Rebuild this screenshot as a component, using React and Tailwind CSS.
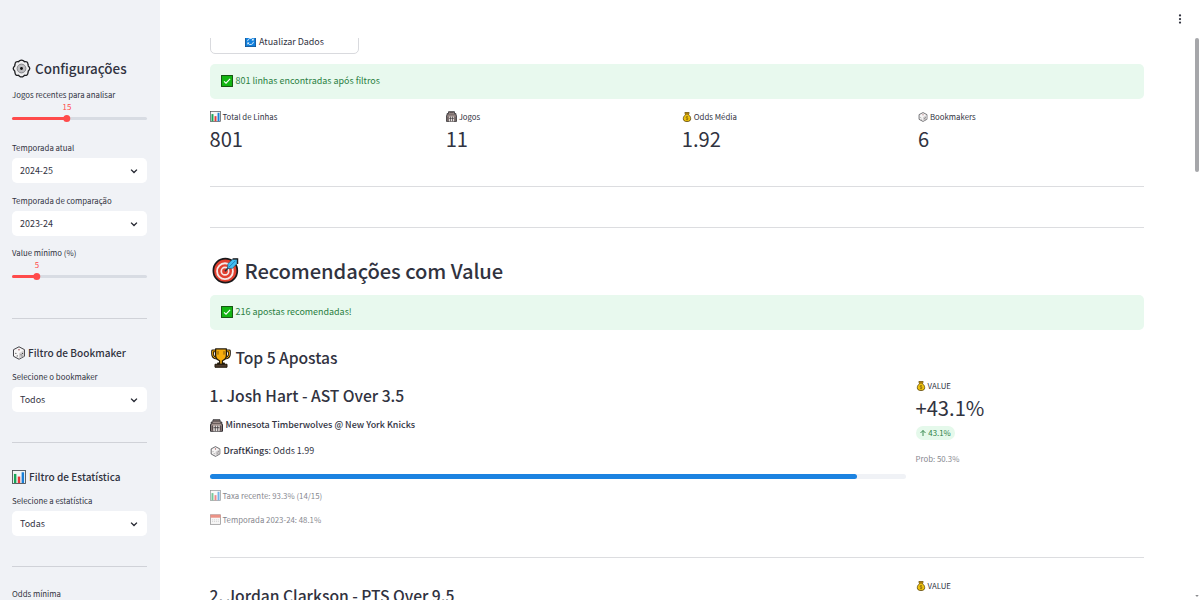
import React from 'react';

const Svg = ({ className, children }) => (
  <svg viewBox="0 0 16 16" className={`shrink-0 ${className}`} fill="none">{children}</svg>
);

const Gear = ({ className }) => (
  <Svg className={className}>
    <path d="M6.300 1.500Q8 .3 9.700 1.500L10.500 2.300Q13.300 1.700 13.500 4.600L13.700 5.800Q16.200 8 13.700 10.200L13.500 11.400Q13.300 14.300 10.500 13.700L9.700 14.500Q8 15.700 6.300 14.500L5.500 13.700Q2.700 14.300 2.500 11.400L2.300 10.200Q-.2 8 2.300 5.800L2.500 4.600Q2.700 1.700 5.500 2.300z" fill="#eeeeef" stroke="#1d1e21" strokeWidth="1.100" strokeLinejoin="round" />
    <circle cx="8" cy="8" r="3.700" fill="#bdbdc0" stroke="#77787c" strokeWidth=".7" />
    <circle cx="8" cy="8" r="1.200" fill="#111" />
  </Svg>
);

const Die = ({ className }) => (
  <Svg className={className}>
    <path d="M8 .9l6.300 3.300v7.500L8 15.100l-6.300-3.400V4.200z" fill="#f6f5f5" stroke="#3a3a40" strokeWidth="1.100" strokeLinejoin="round" />
    <path d="M8 8.200l5.800-3.600v6.800L8 14.500z" fill="#d3d0d1" />
    <circle cx="8" cy="4.300" r=".9" fill="#9c4a4e" />
    <circle cx="4.400" cy="8.500" r=".7" fill="#555" />
    <circle cx="6" cy="11.300" r=".7" fill="#555" />
    <circle cx="10.300" cy="10" r=".7" fill="#444" />
    <circle cx="12" cy="8.500" r=".7" fill="#444" />
    <circle cx="11.500" cy="11.500" r=".6" fill="#444" />
  </Svg>
);

const Bars = ({ className }) => (
  <Svg className={className}>
    <rect x=".6" y=".6" width="14.800" height="14.800" fill="#f4f6f5" stroke="#4a4e52" strokeWidth="1" />
    <rect x="2.200" y="4.500" width="2.800" height="10.400" fill="#18a558" />
    <rect x="6.600" y="7.500" width="2.800" height="7.400" fill="#e5383b" />
    <rect x="11" y="2.600" width="2.800" height="12.300" fill="#1b7fd6" />
  </Svg>
);

const Stadium = ({ className }) => (
  <Svg className={className}>
    <path d="M3.700 1h8.600v2.800h2.200v3h.9v8.300H.6V6.800h.9v-3h2.200z" fill="#a3938f" stroke="#2c2a2e" strokeWidth="1.200" strokeLinejoin="round" />
    <path d="M5 1.900h6v1.300H5z" fill="#4c4243" />
    <path d="M2 5.500h12" stroke="#5b5050" strokeWidth="1" />
    <path d="M2 8h1.600v6H2zM12.400 8H14v6h-1.600z" fill="#55494a" />
    <path d="M4.300 8.200h7.400v6.900H4.300z" fill="#e6e0de" />
    <path d="M6.500 8.200v6.800M9.500 8.200v6.800M4.300 10.700h7.400" stroke="#3a3538" strokeWidth="1" />
  </Svg>
);

const MoneyBag = ({ className }) => (
  <Svg className={className}>
    <path d="M4.600.9h6.800l-1 3.700c2.200 1.200 3.500 3.500 3.500 6 0 3.200-2 4.600-5.900 4.600s-5.900-1.400-5.900-4.600c0-2.500 1.300-4.800 3.500-6z" fill="#efc30d" stroke="#4a3508" strokeWidth="1.200" strokeLinejoin="round" />
    <path d="M4.600 1.200h6.800l-.8 3H5.400z" fill="#a87c0c" />
    <path d="M9.700 7.800c-.8-.8-3.300-.7-3.300.7 0 1.600 3.400.8 3.400 2.400 0 1.400-2.600 1.500-3.600.6M8 6.600v6.600" stroke="#75570a" strokeWidth=".9" />
  </Svg>
);

const Check = ({ className }) => (
  <Svg className={className}>
    <rect x=".7" y=".7" width="14.600" height="14.600" fill="#13b613" stroke="#12540f" strokeWidth="1.300" />
    <path d="M4 8.400l2.700 2.600 5.400-5.800" stroke="#fff" strokeWidth="1.500" />
  </Svg>
);

const Refresh = ({ className }) => (
  <Svg className={className}>
    <rect x=".6" y=".6" width="14.800" height="14.800" fill="#0f7fdc" stroke="#0a4f92" strokeWidth="1.200" />
    <path d="M3.700 7.500a4.400 4.400 0 0 1 7.900-2.200M12.300 8.500a4.400 4.400 0 0 1-7.900 2.200" stroke="#fff" strokeWidth="1.200" />
    <path d="M12.600 3.200v3.200H9.400zM3.400 12.800V9.600h3.200z" fill="#fff" />
  </Svg>
);

const Target = ({ className }) => (
  <Svg className={className}>
    <circle cx="7.900" cy="8.100" r="7.100" fill="#e2402f" stroke="#18181b" strokeWidth="1" />
    <circle cx="7.700" cy="8.400" r="4.700" fill="#e2402f" stroke="#f6e9e7" strokeWidth="1.100" />
    <circle cx="7.700" cy="8.400" r="2.200" fill="#e2402f" stroke="#f6e9e7" strokeWidth="1" />
    <path d="M7.700 8.400l3-3.200" stroke="#20303c" strokeWidth=".9" />
    <path d="M9.400 4L12.200 1.500l2.700-.3-.2 2.800-2.500 2.700-2.900.1z" fill="#42bdf1" stroke="#1d5674" strokeWidth=".4" strokeLinejoin="round" />
    <path d="M12.200 1.100h3v3" stroke="#18181b" strokeWidth=".7" />
    <path d="M10 6.100l3.900-3.900" stroke="#1478b8" strokeWidth=".5" />
  </Svg>
);

const Trophy = ({ className }) => (
  <Svg className={className}>
    <path d="M4 2.300H1.300v2.500c0 2.200 1.400 3.200 3.400 3.200M12 2.300h2.700v2.500c0 2.200-1.400 3.200-3.400 3.200" stroke="#21190a" strokeWidth="2.300" strokeLinejoin="round" />
    <path d="M4 2.300H1.300v2.500c0 2.200 1.400 3.200 3.400 3.200M12 2.300h2.700v2.500c0 2.200-1.400 3.200-3.400 3.200" stroke="#f2a80c" strokeWidth=".8" />
    <path d="M3.700.7h8.600v5.100c0 2.500-1.300 3.700-3.200 4.400v1.900h1.500v1H5.400v-1h1.500v-1.900c-1.900-.7-3.200-1.900-3.200-4.400z" fill="#f6ad0c" stroke="#21190a" strokeWidth="1" strokeLinejoin="round" />
    <path d="M5.600 2.500v2.800M10.400 2.500v2.800" stroke="#7e560a" strokeWidth=".8" />
    <path d="M3.200 13h9.600v2.400H3.200z" fill="#4c3a2c" stroke="#21190a" strokeWidth=".8" />
  </Svg>
);

const Calendar = ({ className }) => (
  <Svg className={className}>
    <rect x=".6" y="1.200" width="14.800" height="13.800" fill="#f3f2f2" stroke="#3b3b3d" strokeWidth="1" />
    <rect x=".6" y="1" width="14.800" height="4.400" fill="#df4a37" />
    <path d="M3 8.500h10M3 11h10" stroke="#aaa" strokeWidth="1.100" strokeDasharray="1.500 1.300" />
  </Svg>
);

const Chevron = () => (
  <Svg className="size-[10px]"><path d="M3.300 5.800L8 10.400l4.700-4.600" stroke="#22252f" strokeWidth="2.200" /></Svg>
);

const Slider = ({ label, value, percent }) => (
  <div>
    <div className="h-[14px] text-[7.83px] leading-[14px]">{label}</div>
    <div className="relative h-[32px]">
      <div className="absolute top-[15px] h-[2.5px] w-full rounded-full bg-[#d8dce3]" />
      <div className="absolute top-[15px] h-[2.5px] rounded-full bg-[#ff4b4b]" style={{ width: `${percent}%` }} />
      <div className="absolute top-[12.5px] size-[7.5px] -translate-x-1/2 rounded-full bg-[#ff4b4b]" style={{ left: `${percent}%` }} />
      <div className="absolute top-0 -translate-x-1/2 text-[7.83px] leading-[10px] text-[#ff4b4b]" style={{ left: `${percent}%` }}>{value}</div>
    </div>
  </div>
);

const Select = ({ label, value }) => (
  <div>
    <div className="h-[17px] text-[7.83px] leading-[14px]">{label}</div>
    <div className="flex h-[25px] items-center justify-between rounded-[5px] bg-white pr-[8px] pl-[8px] text-[8.95px]">
      <span>{value}</span>
      <Chevron />
    </div>
  </div>
);

const Rule = ({ className }) => <div className={`h-px ${className}`} />;

const FilterTitle = ({ icon, gap, children }) => (
  <h3 className={`flex h-[16px] items-center text-[10.07px] leading-[16px] font-medium ${gap}`}>{icon}{children}</h3>
);

const Alert = ({ children }) => (
  <div className="flex h-[35px] items-center gap-[3px] rounded-[5px] bg-[#e8f9ee] pb-px pl-[11px] text-[8.95px] text-[#2a7f43]">
    <Check className="size-[12px]" />
    {children}
  </div>
);

const Metric = ({ icon, label, value }) => (
  <div>
    <div className="flex h-[15px] items-center gap-[2px] text-[7.83px] leading-[15px]">{icon}{label}</div>
    {value && <div className="h-[30px] text-[20.15px] leading-[29px]">{value}</div>}
  </div>
);

export default function App() {
  return (
    <div className="flex h-[600px] w-[1200px] overflow-hidden bg-white font-['Noto_Sans_CJK_SC','Noto_Sans',sans-serif] whitespace-nowrap text-[#31333f]">
      <aside className="h-full w-[159.5px] shrink-0 bg-[#f0f2f6] pt-[58px] pr-[12.5px] pl-[12px]">
        <h2 className="flex h-[21px] items-center gap-[4px] text-[13.43px] leading-[21px] font-medium"><Gear className="size-[19px]" />Configurações</h2>
        <div className="mt-[9px]"><Slider label="Jogos recentes para analisar" value="15" percent={40.7} /></div>
        <div className="mt-[7px]"><Select label="Temporada atual" value="2024-25" /></div>
        <div className="mt-[11px]"><Select label="Temporada de comparação" value="2023-24" /></div>
        <div className="mt-[10px]"><Slider label="Value mínimo (%)" value="5" percent={18.5} /></div>
        <Rule className="mt-[26px] bg-[#d0d2d8]" />
        <div className="mt-[26px]"><FilterTitle gap="gap-[2px]" icon={<Die className="size-[14px]" />}>Filtro de Bookmaker</FilterTitle></div>
        <div className="mt-[9px]"><Select label="Selecione o bookmaker" value="Todos" /></div>
        <Rule className="mt-[30px] bg-[#d0d2d8]" />
        <div className="mt-[26px]"><FilterTitle gap="gap-[3px]" icon={<Bars className="size-[14px]" />}>Filtro de Estatística</FilterTitle></div>
        <div className="mt-[9px]"><Select label="Selecione a estatística" value="Todas" /></div>
        <Rule className="mt-[30px] bg-[#d0d2d8]" />
        <div className="mt-[20px] h-[14px] text-[7.83px] leading-[14px]">Odds mínima</div>
      </aside>

      <div className="flex min-w-0 flex-1 flex-col">
        <header className="flex h-[38px] shrink-0 items-center justify-end pr-[14px]">
          <Svg className="size-[12px]"><circle cx="8" cy="3.2" r="1.5" fill="#31333f" /><circle cx="8" cy="8" r="1.5" fill="#31333f" /><circle cx="8" cy="12.8" r="1.5" fill="#31333f" /></Svg>
        </header>
        <div className="flex min-h-0 flex-1 justify-between overflow-hidden pl-[50px]">
          <main className="w-[934.5px]">
            <button className="-mt-[9px] flex h-[25px] w-[149px] items-center justify-center gap-[3px] rounded-[5px] border border-[#d9dade] pl-px text-[8.95px]"><Refresh className="size-[11px]" />Atualizar Dados</button>
            <div className="mt-[10px]"><Alert>801 linhas encontradas após filtros</Alert></div>
            <div className="mt-[10px] grid grid-cols-4 gap-[10px]">
              <Metric icon={<Bars className="size-[11px]" />} label="Total de Linhas" value="801" />
              <Metric icon={<Stadium className="size-[11px]" />} label="Jogos" value="11" />
              <Metric icon={<MoneyBag className="size-[10px]" />} label="Odds Média" value="1.92" />
              <Metric icon={<Die className="size-[10px]" />} label="Bookmakers" value="6" />
            </div>
            <Rule className="mt-[32px] bg-[#dcdde0]" />
            <Rule className="mt-[40px] bg-[#dcdde0]" />
            <h2 className="mt-[27px] flex h-[31px] items-center gap-[6px] pl-[2px] text-[20.15px] leading-[31px] font-medium tracking-[-0.08px]"><Target className="size-[27px]" />Recomendações com Value</h2>
            <div className="mt-[9px]"><Alert>216 apostas recomendadas!</Alert></div>
            <h3 className="mt-[16px] flex h-[24px] items-center gap-[5px] pl-[1px] text-[15.67px] leading-[24px] font-medium tracking-[-0.05px]"><Trophy className="size-[20px]" />Top 5 Apostas</h3>
            <section className="mt-[8px] flex gap-[10px]">
              <div className="w-[696px]">
                <h4 className="mt-[7px] h-[22px] text-[15.67px] leading-[22px] font-medium tracking-[-0.03px]">1. Josh Hart - AST Over 3.5</h4>
                <p className="mt-[10px] flex h-[16px] items-center gap-[3px] text-[8.95px] font-medium"><Stadium className="size-[13px]" />Minnesota Timberwolves @ New York Knicks</p>
                <p className="mt-[10px] flex h-[16px] items-center gap-[3px] text-[8.95px]"><Die className="size-[11px]" /><span><span className="font-medium">DraftKings</span>: Odds 1.99</span></p>
                <div className="mt-[15px] h-[5px] rounded-full bg-[#f0f2f6]"><div className="h-full w-[93.1%] rounded-full bg-[#1c83e1]" /></div>
                <p className="mt-[9px] flex h-[15px] items-center gap-[2px] text-[7.83px] opacity-60"><Bars className="size-[11px]" />Taxa recente: 93.3% (14/15)</p>
                <p className="mt-[9px] flex h-[15px] items-center gap-[2px] text-[7.83px] opacity-60"><Calendar className="size-[11px]" />Temporada 2023-24: 48.1%</p>
              </div>
              <div className="flex-1">
                <Metric icon={<MoneyBag className="size-[10px]" />} label="VALUE" value="+43.1%" />
                <div className="mt-[3px] flex h-[14px] w-[39px] items-center justify-center gap-[1px] rounded-full bg-[#e5f9eb] text-[7.83px] text-[#2a7f43]">
                  <Svg className="size-[8px]"><path d="M8 14V3M3 8l5-5 5 5" stroke="#2a7f43" strokeWidth="1.8" /></Svg>43.1%
                </div>
                <p className="mt-[12px] h-[14px] text-[7.83px] leading-[14px] opacity-60">Prob: 50.3%</p>
              </div>
            </section>
            <Rule className="mt-[30px] bg-[#dcdde0]" />
            <section className="mt-[20px] flex gap-[10px]">
              <h4 className="mt-[7px] h-[22px] w-[696px] text-[15.67px] leading-[22px] font-medium tracking-[-0.03px]">2. Jordan Clarkson - PTS Over 9.5</h4>
              <Metric icon={<MoneyBag className="size-[10px]" />} label="VALUE" />
            </section>
          </main>
          <div className="flex w-[5px] shrink-0 flex-col justify-between pb-[2px]">
            <div className="h-[134px] w-[4px] rounded-full bg-[#a6a7aa]" />
            <Svg className="size-[4px]"><path d="M1 4h14l-7 8z" fill="#8a8b8e" /></Svg>
          </div>
        </div>
      </div>
    </div>
  );
}
